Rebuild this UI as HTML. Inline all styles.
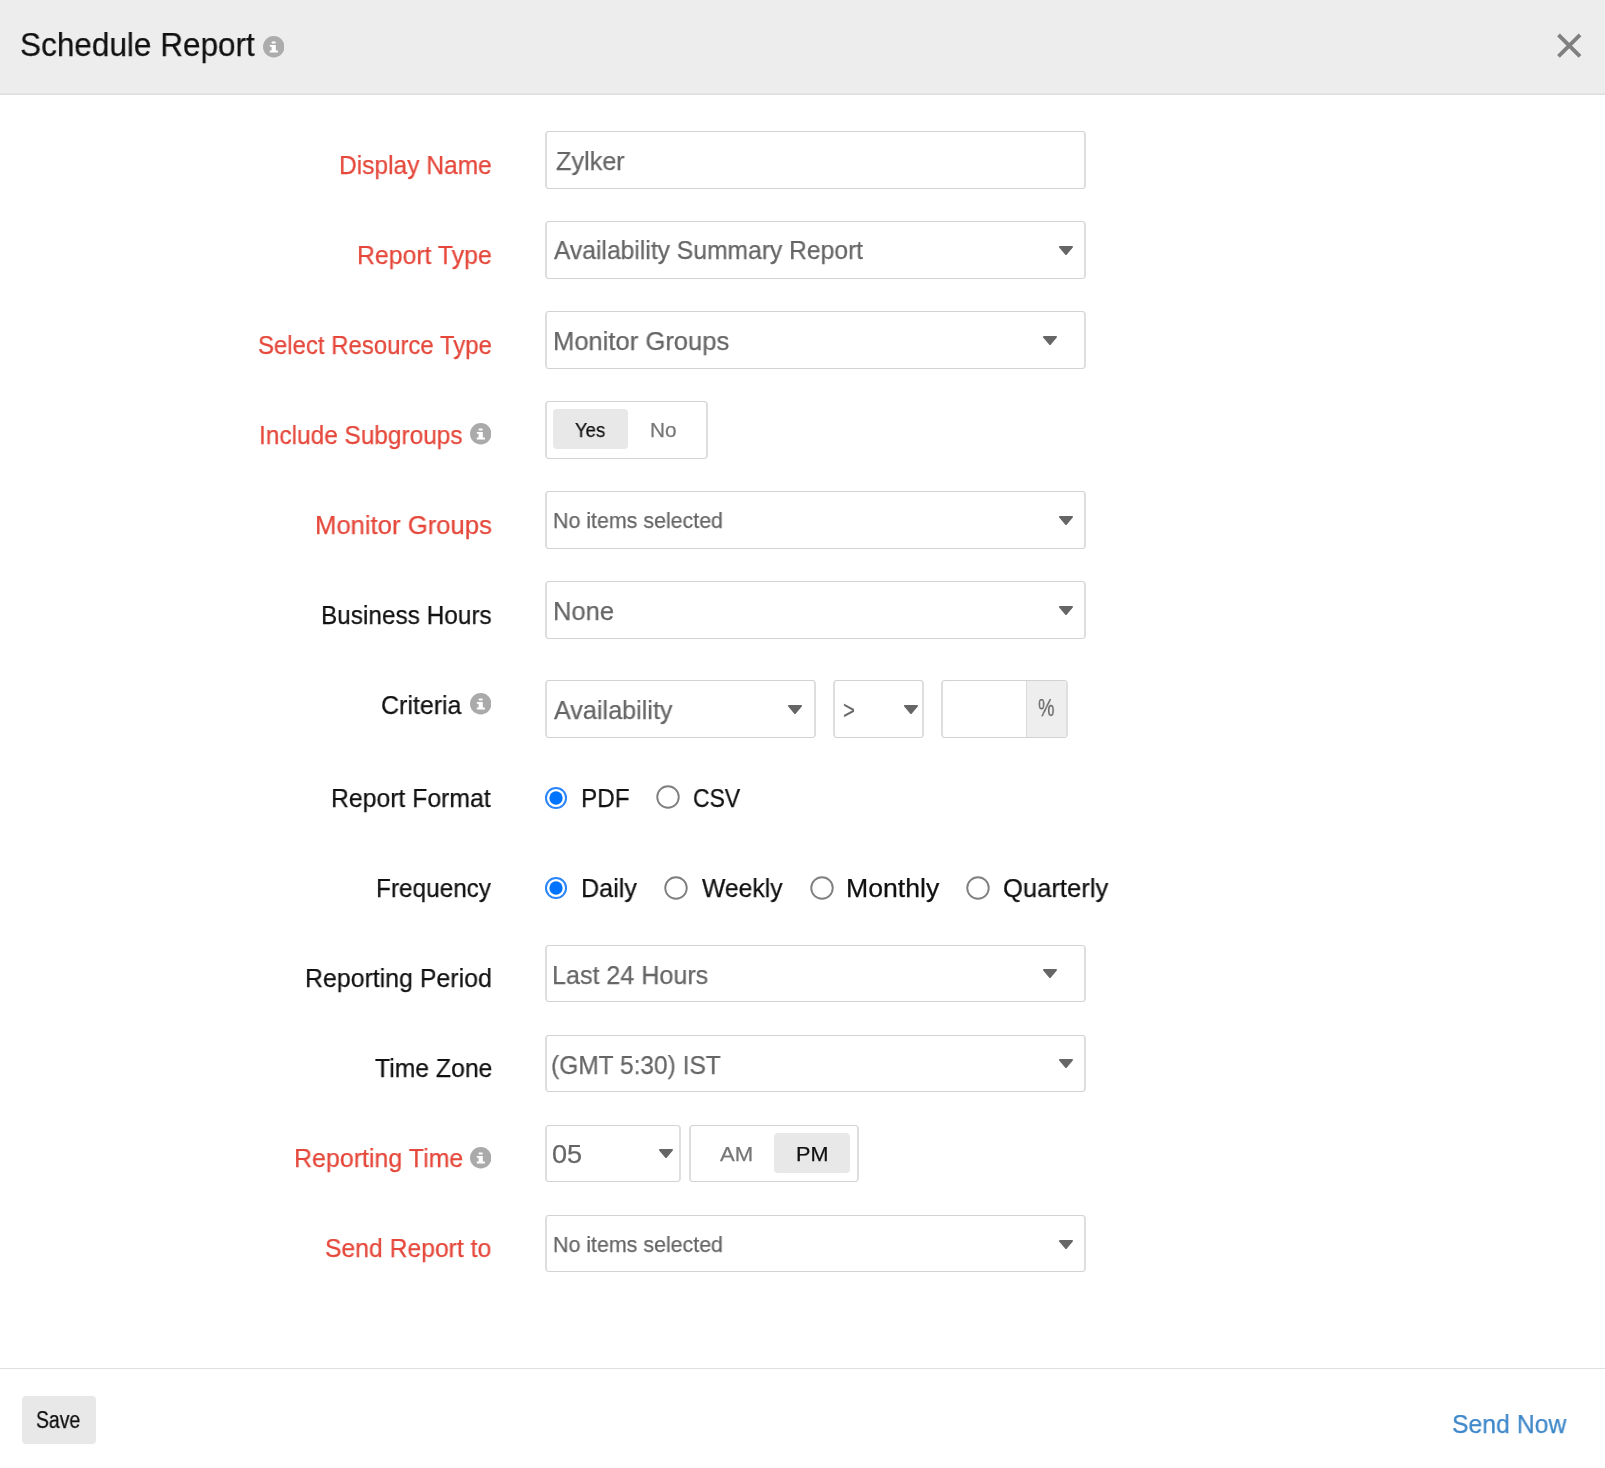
<!DOCTYPE html><html><head><meta charset="utf-8"><title>Schedule Report</title><style>
*{margin:0;padding:0;box-sizing:border-box}
html,body{width:1605px;height:1468px;overflow:hidden;background:#fff}
body{position:relative;font-family:"Liberation Sans",sans-serif}
.t{position:absolute;white-space:nowrap;line-height:1;transform-origin:0 0;will-change:transform;-webkit-text-stroke:0.25px currentColor}
.box{position:absolute;background:#fff;border-style:solid;border-color:#d2d2d2 #dedede;border-width:1px 2px;border-radius:4px}
.car{position:absolute;width:14px;height:9px}
.ic{position:absolute;width:21px;height:21px}
.rad{position:absolute;width:22px;height:22px}
</style></head><body>
<div style="position:absolute;left:0;top:0;width:1605px;height:93px;background:#ededed"></div>
<div style="position:absolute;left:0;top:93px;width:1605px;height:1px;background:#e6e6e6"></div>
<div style="position:absolute;left:0;top:94px;width:1605px;height:1px;background:#dedede"></div>
<div class="box" style="left:545px;top:131px;width:541px;height:58px;"></div>
<div class="box" style="left:545px;top:221px;width:541px;height:58px;"></div>
<div class="box" style="left:545px;top:311px;width:541px;height:58px;"></div>
<div class="box" style="left:545px;top:491px;width:541px;height:58px;"></div>
<div class="box" style="left:545px;top:581px;width:541px;height:58px;"></div>
<div class="box" style="left:545px;top:945px;width:541px;height:57px;"></div>
<div class="box" style="left:545px;top:1035px;width:541px;height:57px;"></div>
<div class="box" style="left:545px;top:1215px;width:541px;height:57px;"></div>
<div class="box" style="left:545px;top:401px;width:163px;height:58px;"></div>
<div style="position:absolute;left:553px;top:409px;width:75px;height:40px;background:#e8e8e8;border-radius:4px"></div>
<div class="box" style="left:545px;top:680px;width:271px;height:58px;"></div>
<div class="box" style="left:833px;top:680px;width:91px;height:58px;"></div>
<div class="box" style="left:941px;top:680px;width:127px;height:58px;overflow:hidden"></div>
<div style="position:absolute;left:1026px;top:681px;width:40px;height:56px;background:#eeeeee;border-left:1px solid #dcdcdc;border-radius:0 3px 3px 0"></div>
<div class="box" style="left:545px;top:1125px;width:136px;height:57px;"></div>
<div class="box" style="left:689px;top:1125px;width:170px;height:57px;"></div>
<div style="position:absolute;left:774px;top:1133px;width:76px;height:40px;background:#e8e8e8;border-radius:4px"></div>
<svg class="car" style="left:1059px;top:246px" viewBox="0 0 14 9"><path d="M0.9 0.9 H13.1 L7 8.2 Z" fill="#666" stroke="#666" stroke-width="1.8" stroke-linejoin="round"/></svg>
<svg class="car" style="left:1043px;top:336px" viewBox="0 0 14 9"><path d="M0.9 0.9 H13.1 L7 8.2 Z" fill="#666" stroke="#666" stroke-width="1.8" stroke-linejoin="round"/></svg>
<svg class="car" style="left:1059px;top:516px" viewBox="0 0 14 9"><path d="M0.9 0.9 H13.1 L7 8.2 Z" fill="#666" stroke="#666" stroke-width="1.8" stroke-linejoin="round"/></svg>
<svg class="car" style="left:1059px;top:606px" viewBox="0 0 14 9"><path d="M0.9 0.9 H13.1 L7 8.2 Z" fill="#666" stroke="#666" stroke-width="1.8" stroke-linejoin="round"/></svg>
<svg class="car" style="left:788px;top:705px" viewBox="0 0 14 9"><path d="M0.9 0.9 H13.1 L7 8.2 Z" fill="#666" stroke="#666" stroke-width="1.8" stroke-linejoin="round"/></svg>
<svg class="car" style="left:904px;top:705px" viewBox="0 0 14 9"><path d="M0.9 0.9 H13.1 L7 8.2 Z" fill="#666" stroke="#666" stroke-width="1.8" stroke-linejoin="round"/></svg>
<svg class="car" style="left:1043px;top:969px" viewBox="0 0 14 9"><path d="M0.9 0.9 H13.1 L7 8.2 Z" fill="#666" stroke="#666" stroke-width="1.8" stroke-linejoin="round"/></svg>
<svg class="car" style="left:1059px;top:1059px" viewBox="0 0 14 9"><path d="M0.9 0.9 H13.1 L7 8.2 Z" fill="#666" stroke="#666" stroke-width="1.8" stroke-linejoin="round"/></svg>
<svg class="car" style="left:659px;top:1149px" viewBox="0 0 14 9"><path d="M0.9 0.9 H13.1 L7 8.2 Z" fill="#666" stroke="#666" stroke-width="1.8" stroke-linejoin="round"/></svg>
<svg class="car" style="left:1059px;top:1240px" viewBox="0 0 14 9"><path d="M0.9 0.9 H13.1 L7 8.2 Z" fill="#666" stroke="#666" stroke-width="1.8" stroke-linejoin="round"/></svg>
<svg style="position:absolute;left:262.8px;top:36.3px;width:21.5px;height:21.5px" viewBox="0 0 21.5 21.5"><circle cx="10.75" cy="10.75" r="10.75" fill="#acacac"/><rect x="8.5" y="5.5" width="4.3" height="2.0" rx="1" fill="#ffffff"/><path d="M6.8 9 H12.8 V14.4 H14.9 V16.6 H6.8 V14.4 H8.6 V10.8 H6.8 Z" fill="#ffffff"/></svg>
<svg style="position:absolute;left:469.5px;top:423.3px;width:21.5px;height:21.5px" viewBox="0 0 21.5 21.5"><circle cx="10.75" cy="10.75" r="10.75" fill="#aaa"/><rect x="8.5" y="5.5" width="4.3" height="2.0" rx="1" fill="#ffffff"/><path d="M6.8 9 H12.8 V14.4 H14.9 V16.6 H6.8 V14.4 H8.6 V10.8 H6.8 Z" fill="#ffffff"/></svg>
<svg style="position:absolute;left:469.5px;top:693.3px;width:21.5px;height:21.5px" viewBox="0 0 21.5 21.5"><circle cx="10.75" cy="10.75" r="10.75" fill="#aaa"/><rect x="8.5" y="5.5" width="4.3" height="2.0" rx="1" fill="#ffffff"/><path d="M6.8 9 H12.8 V14.4 H14.9 V16.6 H6.8 V14.4 H8.6 V10.8 H6.8 Z" fill="#ffffff"/></svg>
<svg style="position:absolute;left:469.5px;top:1147.1px;width:21.5px;height:21.5px" viewBox="0 0 21.5 21.5"><circle cx="10.75" cy="10.75" r="10.75" fill="#aaa"/><rect x="8.5" y="5.5" width="4.3" height="2.0" rx="1" fill="#ffffff"/><path d="M6.8 9 H12.8 V14.4 H14.9 V16.6 H6.8 V14.4 H8.6 V10.8 H6.8 Z" fill="#ffffff"/></svg>
<svg style="position:absolute;left:544px;top:785.5px;width:24px;height:24px" viewBox="0 0 24 24"><circle cx="12" cy="12" r="10.05" fill="#fff" stroke="#2a85fb" stroke-width="2"/><circle cx="12" cy="12" r="6.65" fill="#0073ff"/></svg>
<svg style="position:absolute;left:656px;top:785.4px;width:24px;height:24px" viewBox="0 0 24 24"><circle cx="12" cy="12" r="10.75" fill="#fff" stroke="#7f7f7f" stroke-width="1.9"/></svg>
<svg style="position:absolute;left:544px;top:875.5px;width:24px;height:24px" viewBox="0 0 24 24"><circle cx="12" cy="12" r="10.05" fill="#fff" stroke="#2a85fb" stroke-width="2"/><circle cx="12" cy="12" r="6.65" fill="#0073ff"/></svg>
<svg style="position:absolute;left:664px;top:875.5px;width:24px;height:24px" viewBox="0 0 24 24"><circle cx="12" cy="12" r="10.75" fill="#fff" stroke="#7f7f7f" stroke-width="1.9"/></svg>
<svg style="position:absolute;left:810px;top:875.5px;width:24px;height:24px" viewBox="0 0 24 24"><circle cx="12" cy="12" r="10.75" fill="#fff" stroke="#7f7f7f" stroke-width="1.9"/></svg>
<svg style="position:absolute;left:966px;top:875.5px;width:24px;height:24px" viewBox="0 0 24 24"><circle cx="12" cy="12" r="10.75" fill="#fff" stroke="#7f7f7f" stroke-width="1.9"/></svg>
<svg style="position:absolute;left:1554px;top:30px;width:30px;height:30px" viewBox="0 0 30 30"><path d="M4.48 4.83 L26.02 26.37 M26.02 4.83 L4.48 26.37" stroke="#808080" stroke-width="3.9" stroke-linecap="butt"/></svg>
<div style="position:absolute;left:0;top:1368px;width:1605px;height:1px;background:#e0e0e0"></div>
<div style="position:absolute;left:22px;top:1396px;width:74px;height:48px;background:#e8e8e8;border-radius:4px"></div>
<div class="t" style="left:19.65px;top:26.80px;font-size:34px;color:#111;transform:scaleX(0.9271)">Schedule Report</div>
<div class="t" style="left:338.71px;top:151.90px;font-size:26px;color:#e5483b;transform:scaleX(0.9440)">Display Name</div>
<div class="t" style="left:357.09px;top:241.50px;font-size:26px;color:#e5483b;transform:scaleX(0.9543)">Report Type</div>
<div class="t" style="left:257.68px;top:331.80px;font-size:26px;color:#e5483b;transform:scaleX(0.9210)">Select Resource Type</div>
<div class="t" style="left:259.32px;top:421.50px;font-size:26px;color:#e5483b;transform:scaleX(0.9388)">Include Subgroups</div>
<div class="t" style="left:315.03px;top:511.80px;font-size:26px;color:#e5483b;transform:scaleX(0.9869)">Monitor Groups</div>
<div class="t" style="left:321.03px;top:601.50px;font-size:26px;color:#111111;transform:scaleX(0.9374)">Business Hours</div>
<div class="t" style="left:381.44px;top:691.80px;font-size:26px;color:#111111;transform:scaleX(0.9602)">Criteria</div>
<div class="t" style="left:330.70px;top:785.10px;font-size:26px;color:#111111;transform:scaleX(0.9524)">Report Format</div>
<div class="t" style="left:375.53px;top:874.90px;font-size:26px;color:#111111;transform:scaleX(0.9364)">Frequency</div>
<div class="t" style="left:304.99px;top:965.10px;font-size:26px;color:#111111;transform:scaleX(0.9573)">Reporting Period</div>
<div class="t" style="left:374.60px;top:1054.90px;font-size:26px;color:#111111;transform:scaleX(0.9516)">Time Zone</div>
<div class="t" style="left:294.08px;top:1145.10px;font-size:26px;color:#e5483b;transform:scaleX(0.9601)">Reporting Time</div>
<div class="t" style="left:325.35px;top:1234.90px;font-size:26px;color:#e5483b;transform:scaleX(0.9503)">Send Report to</div>
<div class="t" style="left:556.33px;top:147.80px;font-size:26px;color:#666666;transform:scaleX(0.9696)">Zylker</div>
<div class="t" style="left:554.30px;top:237.20px;font-size:26px;color:#666666;transform:scaleX(0.9479)">Availability Summary Report</div>
<div class="t" style="left:552.93px;top:327.70px;font-size:26px;color:#666666;transform:scaleX(0.9835)">Monitor Groups</div>
<div class="t" style="left:552.86px;top:509.90px;font-size:22px;color:#666666;transform:scaleX(0.9721)">No items selected</div>
<div class="t" style="left:553.34px;top:597.60px;font-size:26px;color:#666666;transform:scaleX(0.9814)">None</div>
<div class="t" style="left:554.00px;top:697.00px;font-size:26px;color:#666666;transform:scaleX(0.9689)">Availability</div>
<div class="t" style="left:842.81px;top:697.00px;font-size:26px;color:#666666;transform:scaleX(0.7923)">&gt;</div>
<div class="t" style="left:1038.13px;top:696.20px;font-size:24px;color:#666666;transform:scaleX(0.7700)">%</div>
<div class="t" style="left:581.13px;top:784.70px;font-size:26px;color:#111111;transform:scaleX(0.9367)">PDF</div>
<div class="t" style="left:692.92px;top:784.70px;font-size:26px;color:#111111;transform:scaleX(0.8827)">CSV</div>
<div class="t" style="left:580.76px;top:874.60px;font-size:26px;color:#111111;transform:scaleX(0.9679)">Daily</div>
<div class="t" style="left:701.90px;top:874.60px;font-size:26px;color:#111111;transform:scaleX(0.9506)">Weekly</div>
<div class="t" style="left:845.75px;top:874.60px;font-size:26px;color:#111111;transform:scaleX(1.0247)">Monthly</div>
<div class="t" style="left:1002.72px;top:874.60px;font-size:26px;color:#111111;transform:scaleX(0.9840)">Quarterly</div>
<div class="t" style="left:552.17px;top:962.00px;font-size:26px;color:#666666;transform:scaleX(0.9654)">Last 24 Hours</div>
<div class="t" style="left:551.12px;top:1051.80px;font-size:26px;color:#666666;transform:scaleX(0.9421)">(GMT 5:30) IST</div>
<div class="t" style="left:552.46px;top:1141.40px;font-size:26px;color:#666666;transform:scaleX(1.0444)">05</div>
<div class="t" style="left:719.70px;top:1143.60px;font-size:20px;color:#777;transform:scaleX(1.1071)">AM</div>
<div class="t" style="left:795.64px;top:1143.60px;font-size:20px;color:#111;transform:scaleX(1.0808)">PM</div>
<div class="t" style="left:575.28px;top:419.80px;font-size:20px;color:#111;transform:scaleX(0.9226)">Yes</div>
<div class="t" style="left:649.62px;top:419.80px;font-size:20px;color:#777;transform:scaleX(1.0391)">No</div>
<div class="t" style="left:552.86px;top:1233.90px;font-size:22px;color:#666666;transform:scaleX(0.9721)">No items selected</div>
<div class="t" style="left:36.06px;top:1408.90px;font-size:23px;color:#111;transform:scaleX(0.8412)">Save</div>
<div class="t" style="left:1452.15px;top:1410.70px;font-size:26px;color:#3d87c9;transform:scaleX(0.9529)">Send Now</div>
</body></html>
